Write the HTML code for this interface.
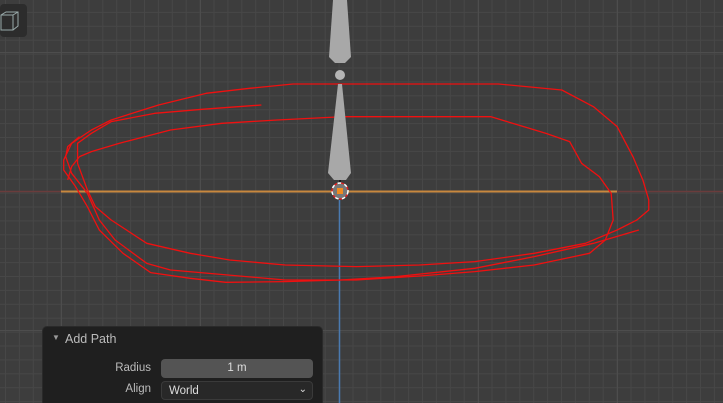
<!DOCTYPE html><html><head><style>
html,body{margin:0;width:723px;height:403px;overflow:hidden}
body{background:#3d3d3d;font-family:"Liberation Sans",sans-serif;position:relative}
svg{position:absolute;left:0;top:0}
.panel{position:absolute;left:42px;top:326px;width:279px;height:90px;background:#1f1f1f;border-radius:5px;border:1px solid #2a2a2a;color:#ccc;font-size:12px}
.f{position:absolute;left:118px;width:152px;height:19px;border-radius:4px;font-size:11.5px;line-height:19px}
.l{position:absolute;width:108px;text-align:right;font-size:11.5px}
</style></head><body>
<svg width="723" height="403">
<defs>
<pattern id="g" x="5" y="-2" width="13.9" height="13.9" patternUnits="userSpaceOnUse"><path d="M0 0.5H13.9M0.5 0V13.9" stroke="#474747" stroke-width="1" fill="none"/></pattern>
</defs>
<rect width="723" height="403" fill="url(#g)"/>
<g stroke="#4d4d4d" stroke-width="1"><path d="M61.5 0V403M200.5 0V403M478.5 0V403M617.5 0V403M0 52.5H723M0 330.5H723"/></g>
<path d="M0 191.5H723" stroke="#6a3c3c" stroke-width="1.5"/>
<path d="M61 191.5H617" stroke="#c8883e" stroke-width="2"/>
<path d="M339.5 200V403" stroke="#4a7ab0" stroke-width="1.5"/>
<g transform="translate(40,80) scale(0.3953,0.3333)" fill="none" stroke="#f01010" stroke-width="1.3" stroke-linejoin="round">
<polyline vector-effect="non-scaling-stroke" points="1515,450 1400,490 1250,530 1100,565 900,590 760,600 620,605 470,607 380,595 280,578 210,520 150,450 120,380 90,320 60,270 60,240 80,190 130,150 180,120 300,75 420,40 530,25 640,12 900,12 1160,12 1320,30 1400,80 1460,140 1500,230 1525,300 1540,360 1540,390 1510,420 1460,450 1380,490 1250,520 1100,545 960,555 800,560 620,555 480,540 380,520 270,490 180,420 140,380 120,330 95,250 95,190 130,160 180,125 290,100 410,88 560,75"/>
<polyline vector-effect="non-scaling-stroke" points="100,170 70,200 65,230 80,280 120,340 150,420 190,480 270,550 330,570 620,600 800,600 960,588 1100,575 1250,555 1390,520 1430,480 1450,420 1445,340 1415,290 1370,250 1340,185 1280,160 1140,110 770,110 600,120 460,130 330,150 200,190 130,215 100,230 80,260 70,300"/>
</g>
<g fill="#a8a8a8">
<path d="M333 0H347L351 57L345 63H335L329 57Z"/>
<circle cx="340" cy="75" r="5" fill="#b5b5b5"/>
<path d="M338 84H342L351 173L346 180H334L328 173Z"/>
</g>
<path d="M340 180V200" stroke="#111" stroke-width="1.5"/>
<circle cx="340" cy="191" r="8" fill="#777" stroke="#fff" stroke-width="1.5" stroke-dasharray="4 3"/>
<circle cx="340" cy="191" r="8" fill="none" stroke="#e02020" stroke-width="1.5" stroke-dasharray="3 4" stroke-dashoffset="3.5"/>
<rect x="337" y="188" width="6" height="6" fill="#f08a20"/>
<rect x="0" y="4" width="27" height="33" rx="4" fill="#2c2c2c"/>
<path d="M1 15L6 12H18V26L13 30H1Z M1 15H13V30 M13 15L18 12" fill="none" stroke="#9aa" stroke-width="1"/>
</svg>
<div class="panel">
<div style="position:absolute;left:9px;top:6px;font-size:8px;color:#999">▼</div>
<div style="position:absolute;left:22px;top:5px;font-size:12.5px;color:#bbb">Add Path</div>
<div class="l" style="left:0;top:35px;color:#bbb">Radius</div>
<div class="f" style="top:32px;background:#545454;text-align:center;color:#ddd">1 m</div>
<div class="l" style="left:0;top:56px;color:#bbb">Align</div>
<div class="f" style="top:54px;background:#282828;border:1px solid #3a3a3a;height:19px;line-height:18px;color:#ddd;box-sizing:border-box;padding-left:7px">World<span style="position:absolute;right:5px;top:-1px;font-size:10px">⌄</span></div>
</div>
</body></html>
